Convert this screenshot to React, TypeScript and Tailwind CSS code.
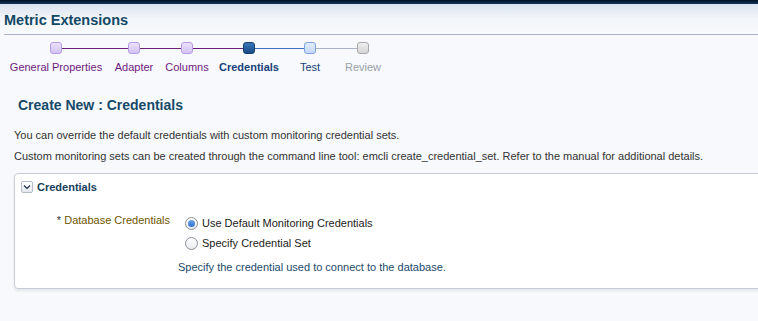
import React from 'react';

type StepState = 'visited' | 'current' | 'next' | 'disabled';

interface Step {
  label: string;
  state: StepState;
  width: string;
  leftLine?: string;
  rightLine?: string;
}

const steps: Step[] = [
  { label: 'General Properties', state: 'visited', width: 'w-[100px]', rightLine: 'bg-[#6b1f7c]' },
  { label: 'Adapter', state: 'visited', width: 'w-[56px]', leftLine: 'bg-[#6b1f7c]', rightLine: 'bg-[#6b1f7c]' },
  { label: 'Columns', state: 'visited', width: 'w-[50px]', leftLine: 'bg-[#6b1f7c]', rightLine: 'bg-[#6b1f7c]' },
  { label: 'Credentials', state: 'current', width: 'w-[74px]', leftLine: 'bg-[#6b1f7c]', rightLine: 'bg-[#3f6fc0]' },
  { label: 'Test', state: 'next', width: 'w-[48px]', leftLine: 'bg-[#3f6fc0]', rightLine: 'bg-[#a9b2c3]' },
  { label: 'Review', state: 'disabled', width: 'w-[58px]', leftLine: 'bg-[#a9b2c3]' },
];

const nodeClass: Record<StepState, string> = {
  visited: 'bg-gradient-to-b from-[#ebe2fb] to-[#d3c2f3] border-[#b79ae9]',
  current: 'bg-gradient-to-b from-[#3b78b8] to-[#164a85] border-[#12406f]',
  next: 'bg-gradient-to-b from-[#e3edfd] to-[#c5d9f8] border-[#7ea3e2]',
  disabled: 'bg-gradient-to-b from-[#eeeeee] to-[#d6d6d6] border-[#a9a9a9]',
};

const labelClass: Record<StepState, string> = {
  visited: 'text-[#6e1a7e]',
  current: 'text-[#173f7a] font-bold',
  next: 'text-[#173f7a]',
  disabled: 'text-[#9aa0ab]',
};

const Train = () => (
  <div className="flex ml-[6px] mt-[7px]">
    {steps.map((s) => (
      <div key={s.label} className={`flex flex-col items-center ${s.width}`}>
        <div className="flex items-center w-full h-[12px]">
          <div className={`flex-1 h-px ${s.leftLine ?? ''}`} />
          <div className={`w-[12px] h-[12px] rounded-[3px] border ${nodeClass[s.state]}`} />
          <div className={`flex-1 h-px ${s.rightLine ?? ''}`} />
        </div>
        <div className={`mt-[7px] text-[11px] leading-[13px] whitespace-nowrap ${labelClass[s.state]}`}>
          {s.label}
        </div>
      </div>
    ))}
  </div>
);

const Radio = ({ checked, label }: { checked?: boolean; label: string }) => (
  <div className="flex items-center h-[20px]">
    <span className="w-[13px] h-[13px] rounded-full border border-[#8a8f98] bg-gradient-to-b from-[#ffffff] to-[#e9ecf0] flex items-center justify-center">
      {checked && <span className="w-[7px] h-[7px] rounded-full bg-gradient-to-b from-[#6fa6ea] to-[#2c6ccc]" />}
    </span>
    <span className="ml-[4px] text-[11px] text-[#222]">{label}</span>
  </div>
);

export default function App() {
  return (
    <div
      className="w-[758px] h-[321px] overflow-hidden bg-[#f7f9fc] text-[#333]"
      style={{ fontFamily: '"Liberation Sans", Arial, sans-serif' }}
    >
      {/* top bar */}
      <div className="h-[4px] bg-gradient-to-b from-[#021027] to-[#12345a]" />
      <div className="h-[30px] bg-gradient-to-b from-[#dbe3ef] via-[#f3f6fa] to-[#f7f9fc] flex items-center px-[4px]">
        <h1 className="text-[14.5px] font-bold text-[#124866] leading-none mt-[3px]">Metric Extensions</h1>
      </div>
      <div className="ml-[4px] h-px bg-[#aab3c4]" />

      <Train />

      <h2 className="ml-[18px] mt-[23px] text-[14px] font-bold text-[#164a68] leading-[16px]">
        Create New : Credentials
      </h2>

      <div className="ml-[14px] mt-[12px] text-[11px] leading-[21px] text-[#333]">
        <p>You can override the default credentials with custom monitoring credential sets.</p>
        <p>Custom monitoring sets can be created through the command line tool: emcli create_credential_set. Refer to the manual for additional details.</p>
      </div>

      {/* Credentials panel */}
      <div className="ml-[14px] mt-[6px] w-[760px] h-[116px] bg-white border border-[#c7cdd8] rounded-[4px] shadow-[0_2px_3px_rgba(0,0,0,0.08)]">
        <div className="flex items-center h-[26px] pl-[6px]">
          <span className="w-[12px] h-[12px] border border-[#b5bcc8] rounded-[2px] bg-gradient-to-b from-[#ffffff] to-[#e4e8ee] flex items-center justify-center">
            <svg width="8" height="6" viewBox="0 0 8 6">
              <path d="M1 1.5 L4 4.5 L7 1.5" stroke="#1c2e4a" strokeWidth="1.2" fill="none" />
            </svg>
          </span>
          <span className="ml-[4px] text-[11px] font-bold text-[#163f5c]">Credentials</span>
        </div>

        <div className="flex mt-[13px]">
          <div className="w-[155px] text-right text-[11px] text-[#6f5400] leading-[13px] pt-[1px]">
            <span className="text-[#333]">* </span>Database Credentials
          </div>
          <div className="ml-[15px]">
            <Radio checked label="Use Default Monitoring Credentials" />
            <Radio label="Specify Credential Set" />
            <div className="mt-[6px] -ml-[7px] text-[11px] text-[#1b4a6a]">
              Specify the credential used to connect to the database.
            </div>
          </div>
        </div>
      </div>
    </div>
  );
}
